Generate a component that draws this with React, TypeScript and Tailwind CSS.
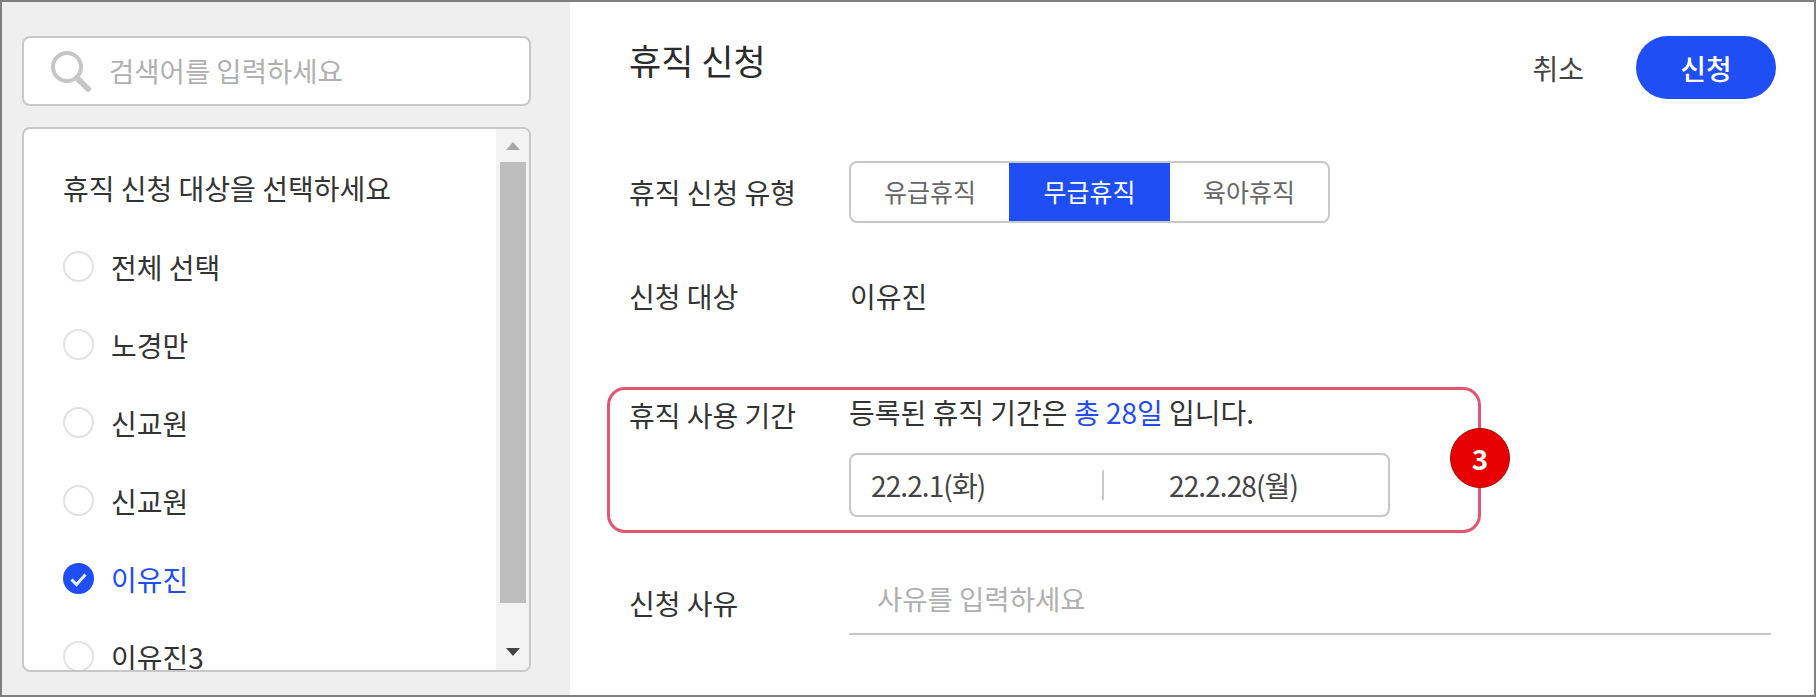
import React from 'react';

const people = [
  { name: '전체 선택' },
  { name: '노경만' },
  { name: '신교원' },
  { name: '신교원' },
  { name: '이유진', checked: true },
  { name: '이유진3' },
];

const Radio = ({ checked }: { checked?: boolean }) =>
  checked ? (
    <svg width="31" height="31" viewBox="0 0 31 31" className="shrink-0">
      <circle cx="15.5" cy="15.5" r="15.5" fill="#1f4ef5" />
      <path d="M8.5 16.5l5 5 9-10" fill="none" stroke="#e8edff" strokeWidth="3" />
    </svg>
  ) : (
    <span className="w-[31px] h-[31px] shrink-0 rounded-full border-2 border-[#e2e2e2] bg-white" />
  );

const Sidebar = () => (
  <aside className="w-[568px] shrink-0 bg-[#efefef] pl-[20px] pr-[39px] pt-[34px]">
    <div className="h-[70px] flex items-center pl-[26px] gap-[17px] bg-white border-2 border-[#c8c8c8] rounded-[8px]">
      <svg width="42" height="42" viewBox="0 0 42 42" className="shrink-0">
        <circle cx="17" cy="17" r="14" fill="none" stroke="#c6c6c6" strokeWidth="4" />
        <path d="M27 28l11 11" stroke="#c6c6c6" strokeWidth="6" strokeLinecap="round" />
      </svg>
      <input
        placeholder="검색어를 입력하세요"
        className="flex-1 min-w-0 outline-none text-[27.5px] placeholder:text-[#b0b0b0]"
      />
    </div>
    <div className="mt-[21px] h-[545px] flex bg-white border-2 border-[#c8c8c8] rounded-[8px] overflow-hidden">
      <div className="flex-1 min-w-0 overflow-hidden pl-[39px] pt-[38px]">
        <p className="text-[28px] leading-[42px] text-[#333]">휴직 신청 대상을 선택하세요</p>
        <ul className="mt-[42px] flex flex-col gap-[47px]">
          {people.map((p, i) => (
            <li key={i} className="h-[31px] flex items-center gap-[17px] shrink-0">
              <Radio checked={p.checked} />
              <span className={`text-[28px] ${p.checked ? 'text-[#1f4ef5]' : 'text-[#333]'}`}>{p.name}</span>
            </li>
          ))}
        </ul>
      </div>
      <div className="w-[33px] shrink-0 bg-[#f3f3f3] flex flex-col items-center">
        <div className="h-[33px] flex items-center justify-center">
          <span className="w-0 h-0 border-x-[7px] border-x-transparent border-b-[8px] border-b-[#a6a6a6]" />
        </div>
        <div className="w-[26px] h-[441px] bg-[#bdbdbd]" />
        <div className="flex-1 flex items-end pb-[14px]">
          <span className="w-0 h-0 border-x-[7px] border-x-transparent border-t-[8px] border-t-[#444]" />
        </div>
      </div>
    </div>
  </aside>
);

const tabs = ['유급휴직', '무급휴직', '육아휴직'];

const Main = () => (
  <main className="flex-1 min-w-0 bg-white pl-[59px] pr-[38px] pt-[34px] text-[#333]">
    <header className="h-[63px] flex items-start justify-between">
      <h1 className="text-[35px] leading-[48px] text-[#2b2b2b]">휴직 신청</h1>
      <div className="flex items-center gap-[52px]">
        <button className="text-[28px] text-[#444]">취소</button>
        <button className="w-[140px] h-[63px] rounded-full bg-[#1f4ef5] text-white text-[28px] font-medium">신청</button>
      </div>
    </header>

    <div className="mt-[62px] flex items-center">
      <span className="w-[220px] text-[28px]">휴직 신청 유형</span>
      <div className="h-[62px] flex border-2 border-[#c8c8c8] rounded-[8px] overflow-hidden">
        {tabs.map((t, i) => (
          <span
            key={t}
            className={`flex items-center justify-center text-[25px] ${
              i === 1 ? 'w-[161px] -my-[2px] bg-[#1f4ef5] text-white' : i === 0 ? 'w-[158px] text-[#666]' : 'w-[158px] text-[#666]'
            }`}
          >
            {t}
          </span>
        ))}
      </div>
    </div>

    <div className="mt-[53px] h-[40px] flex items-center text-[28px]">
      <span className="w-[221px]">신청 대상</span>
      <span>이유진</span>
    </div>

    <section className="relative mt-[71px] -ml-[22px] w-[874px] h-[146px] border-[3px] border-[#e2566f] rounded-[18px] pl-[19px] pt-[1px] flex">
      <span className="w-[220px] pt-[3px] text-[28px] leading-[42px]">휴직 사용 기간</span>
      <div className="flex-1">
        <p className="text-[28px] leading-[42px]">
          등록된 휴직 기간은 <span className="text-[#1f4ef5]">총 28일</span> 입니다.
        </p>
        <div className="mt-[20px] w-[541px] h-[64px] flex items-center border-2 border-[#c8c8c8] rounded-[8px] text-[28px] tracking-[-0.9px] text-[#444]">
          <span className="pl-[20px] w-[251px]">22.2.1(화)</span>
          <span className="w-[2px] h-[30px] bg-[#c8c8c8]" />
          <span className="pl-[65px]">22.2.28(월)</span>
        </div>
      </div>
      <span className="absolute -right-[32px] top-[38px] w-[60px] h-[60px] rounded-full bg-[#e60000] border border-[#b00000] flex items-center justify-center text-white text-[28px] font-bold">
        3
      </span>
    </section>

    <div className="mt-[41px] flex items-center">
      <span className="w-[220px] text-[28px] -mt-[4px]">신청 사유</span>
      <div className="w-[922px] h-[61px] border-b-2 border-[#c8c8c8] pl-[28px] pb-[10px] flex items-center">
        <input
          placeholder="사유를 입력하세요"
          className="w-full outline-none text-[27.5px] placeholder:text-[#b0b0b0]"
        />
      </div>
    </div>
  </main>
);

export default function App() {
  return (
    <div
      className="w-[1816px] h-[697px] flex border-2 border-[#808080] overflow-hidden"
      style={{ fontFamily: '"Noto Sans CJK KR", "Noto Sans", sans-serif' }}
    >
      <Sidebar />
      <Main />
    </div>
  );
}
